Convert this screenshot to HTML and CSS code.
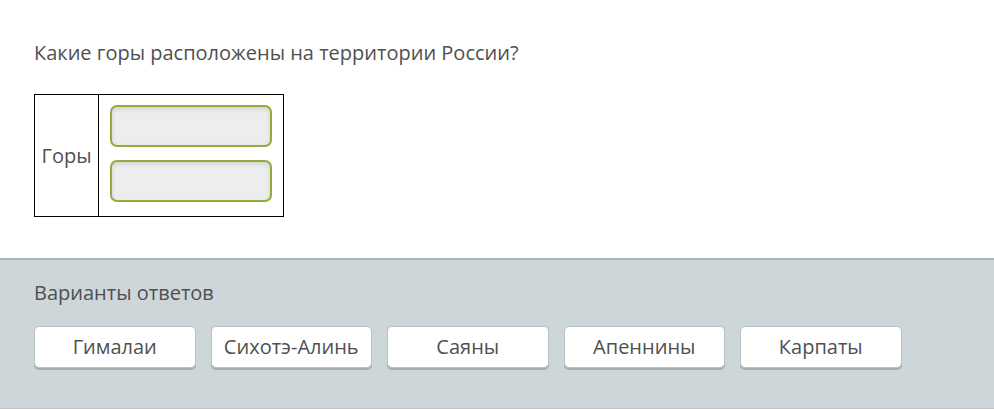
FILE: index.html
```html
<!DOCTYPE html>
<html lang="ru">
<head>
    <meta charset="UTF-8">
    <meta name="viewport" content="width=device-width, initial-scale=1.0">
    <title>Задание</title>
    <link rel="stylesheet" href="styles.css">
</head>
<body>
    <div class="task">
        <div class="question">Какие горы расположены на территории России?</div>

        <table class="groups">
            <tr>
                <td class="group-name">Горы</td>
                <td class="group-slots">
                    <div class="slot"></div>
                    <div class="slot"></div>
                </td>
            </tr>
        </table>
    </div>

    <div class="answers">
        <div class="answers-title">Варианты ответов</div>
        <div class="options">
            <div class="option">Гималаи</div>
            <div class="option">Сихотэ-Алинь</div>
            <div class="option">Саяны</div>
            <div class="option">Апеннины</div>
            <div class="option">Карпаты</div>
        </div>
    </div>
</body>
</html>
```

FILE: styles.css
```css
body {
    margin: 0;
    font-family: "Open Sans", Arial, sans-serif;
    color: #505050;
    background-color: #fff;
}
.task {
    padding: 39px 34px 41px;
}
.question {
    font-size: 20px;
    line-height: 28px;
    margin-bottom: 27px;
}
.groups {
    border-collapse: collapse;
    width: 250px;
}
.groups td {
    border: 1px solid #000;
    padding: 0;
}
.group-name {
    width: 63px;
    font-size: 20px;
    text-align: center;
    vertical-align: middle;
}
.group-slots {
    padding: 10px 11px 14px 11px !important;
}
.slot {
    height: 38px;
    border: 2px solid #8fae3c;
    border-radius: 7px;
    background-color: #ededed;
    box-shadow: inset 0 2px 4px rgba(0, 0, 0, 0.12);
}
.slot + .slot {
    margin-top: 13px;
}
.answers {
    background-color: #cdd6d8;
    border-top: 2px solid #a9b3b4;
    border-bottom: 1px solid #bcc5c6;
    padding: 19px 34px 40px;
}
.answers-title {
    font-size: 20px;
    line-height: 28px;
    margin-bottom: 19px;
}
.options {
    display: flex;
    gap: 15px;
}
.option {
    box-sizing: border-box;
    width: 161.5px;
    height: 42px;
    line-height: 40px;
    text-align: center;
    font-size: 20px;
    background-color: #fff;
    border: 1px solid #b9c1c3;
    border-radius: 5px;
    box-shadow: 0 2px 0 #a4aeaf;
}
```
